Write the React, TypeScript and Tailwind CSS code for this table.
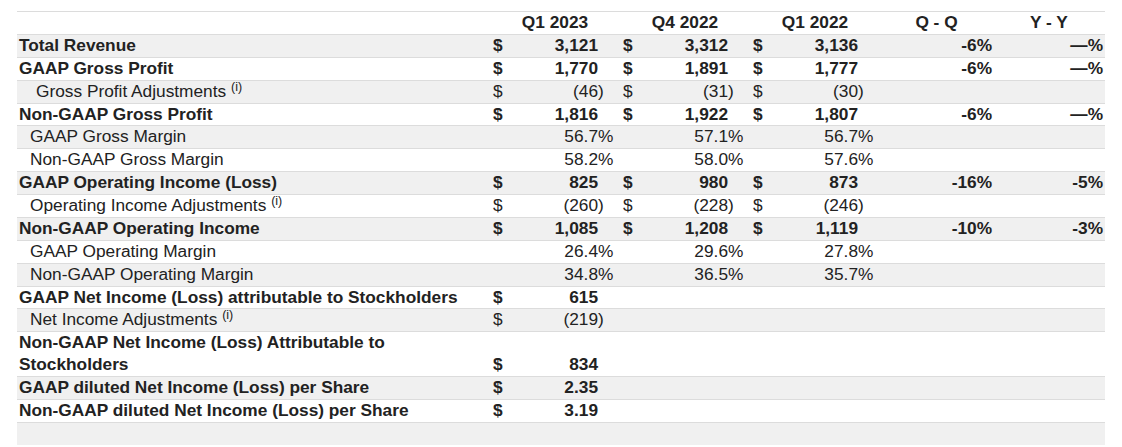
import React from "react";

type Cell = { v: string; s?: string } | null;

interface Row {
  label: React.ReactNode;
  bold?: boolean;
  indent?: string;
  dollar?: boolean;
  cells?: Cell[];
  qq?: string;
  yy?: string;
  h?: string;
}

const Note = () => (
  <>
    {" "}
    <sup className="text-[12.5px] relative -top-[6px]">(i)</sup>
  </>
);

const rows: Row[] = [
  {
    label: "Total Revenue",
    bold: true,
    dollar: true,
    cells: [{ v: "3,121" }, { v: "3,312" }, { v: "3,136" }],
    qq: "-6%",
    yy: "—%",
  },
  {
    label: "GAAP Gross Profit",
    bold: true,
    dollar: true,
    cells: [{ v: "1,770" }, { v: "1,891" }, { v: "1,777" }],
    qq: "-6%",
    yy: "—%",
  },
  {
    label: (
      <>
        Gross Profit Adjustments
        <Note />
      </>
    ),
    indent: "pl-[19px]",
    dollar: true,
    cells: [
      { v: "(46", s: ")" },
      { v: "(31", s: ")" },
      { v: "(30", s: ")" },
    ],
  },
  {
    label: "Non-GAAP Gross Profit",
    bold: true,
    dollar: true,
    h: "h-[22px]",
    cells: [{ v: "1,816" }, { v: "1,922" }, { v: "1,807" }],
    qq: "-6%",
    yy: "—%",
  },
  {
    label: "GAAP Gross Margin",
    indent: "pl-[13px]",
    cells: [
      { v: "56.7", s: "%" },
      { v: "57.1", s: "%" },
      { v: "56.7", s: "%" },
    ],
  },
  {
    label: "Non-GAAP Gross Margin",
    indent: "pl-[13px]",
    cells: [
      { v: "58.2", s: "%" },
      { v: "58.0", s: "%" },
      { v: "57.6", s: "%" },
    ],
  },
  {
    label: "GAAP Operating Income (Loss)",
    bold: true,
    dollar: true,
    cells: [{ v: "825" }, { v: "980" }, { v: "873" }],
    qq: "-16%",
    yy: "-5%",
  },
  {
    label: (
      <>
        Operating Income Adjustments
        <Note />
      </>
    ),
    indent: "pl-[13px]",
    dollar: true,
    cells: [
      { v: "(260", s: ")" },
      { v: "(228", s: ")" },
      { v: "(246", s: ")" },
    ],
  },
  {
    label: "Non-GAAP Operating Income",
    bold: true,
    dollar: true,
    cells: [{ v: "1,085" }, { v: "1,208" }, { v: "1,119" }],
    qq: "-10%",
    yy: "-3%",
  },
  {
    label: "GAAP Operating Margin",
    indent: "pl-[13px]",
    cells: [
      { v: "26.4", s: "%" },
      { v: "29.6", s: "%" },
      { v: "27.8", s: "%" },
    ],
  },
  {
    label: "Non-GAAP Operating Margin",
    indent: "pl-[13px]",
    cells: [
      { v: "34.8", s: "%" },
      { v: "36.5", s: "%" },
      { v: "35.7", s: "%" },
    ],
  },
  {
    label: "GAAP Net Income (Loss) attributable to Stockholders",
    bold: true,
    dollar: true,
    h: "h-[22px]",
    cells: [{ v: "615" }],
  },
  {
    label: (
      <>
        Net Income Adjustments
        <Note />
      </>
    ),
    indent: "pl-[13px]",
    dollar: true,
    cells: [{ v: "(219", s: ")" }],
  },
  {
    label: (
      <>
        Non-GAAP Net Income (Loss) Attributable to
        <br />
        Stockholders
      </>
    ),
    bold: true,
    dollar: true,
    h: "h-[45px]",
    cells: [{ v: "834" }],
  },
  {
    label: "GAAP diluted Net Income (Loss) per Share",
    bold: true,
    dollar: true,
    cells: [{ v: "2.35" }],
  },
  {
    label: "Non-GAAP diluted Net Income (Loss) per Share",
    bold: true,
    dollar: true,
    cells: [{ v: "3.19" }],
  },
];

const grid = "grid grid-cols-[473px_130px_130px_130px_113px_112px]";

function Period({ cell, dollar }: { cell: Cell; dollar?: boolean }) {
  if (!cell) return <div />;
  return (
    <div className="flex items-end -translate-y-px">
      <span className="w-[18px] pl-[3px]">{dollar ? "$" : ""}</span>
      <span className="flex-1 text-right">{cell.v}</span>
      <span className="w-[22px] text-left">{cell.s ?? ""}</span>
    </div>
  );
}

export default function App() {
  return (
    <div className="w-[1122px] h-[447px] bg-white pt-[11px] pl-[17px] font-['Liberation_Sans',Arial,sans-serif] text-[17.3px] text-[#222]">
      <div className="w-[1088px] border-t border-[#dcdcdc]">
        {/* Header */}
        <div
          className={`${grid} h-[23px] leading-[22px] border-b border-[#dcdcdc] font-bold`}
        >
          <div />
          <div className="text-center -translate-y-px">Q1 2023</div>
          <div className="text-center -translate-y-px">Q4 2022</div>
          <div className="text-center -translate-y-px">Q1 2022</div>
          <div className="text-center -translate-y-px">Q - Q</div>
          <div className="text-center -translate-y-px">Y - Y</div>
        </div>

        {rows.map((r, i) => (
          <div
            key={i}
            className={`${grid} ${r.h ?? "h-[23px]"} leading-[22px] border-b border-[#dcdcdc] items-end ${
              i % 2 === 0 ? "bg-[#f0f0f0]" : "bg-white"
            } ${r.bold ? "font-bold" : "font-normal"}`}
          >
            <div className={`${r.indent ?? "pl-[2px]"} self-start -translate-y-px`}>
              {r.label}
            </div>
            {[0, 1, 2].map((k) => (
              <Period key={k} cell={r.cells?.[k] ?? null} dollar={r.dollar} />
            ))}
            <div className="text-right pr-[1px] -translate-y-px">{r.qq ?? ""}</div>
            <div className="text-right pr-[2px] -translate-y-px">{r.yy ?? ""}</div>
          </div>
        ))}

        <div className="h-[22px] bg-[#f0f0f0]" />
      </div>
    </div>
  );
}
